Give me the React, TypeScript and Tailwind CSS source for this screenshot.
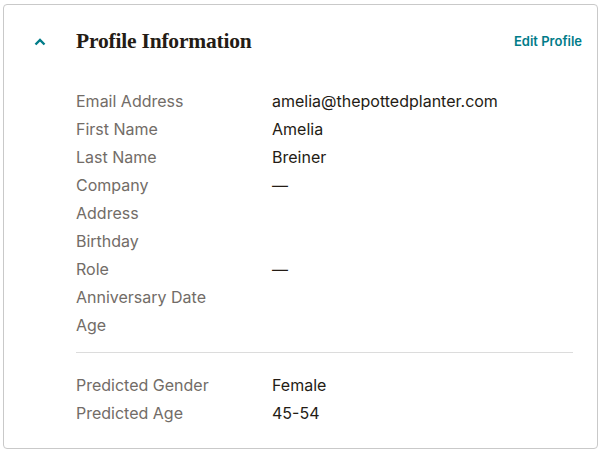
import React from "react";

const rows: [string, string][] = [
  ["Email Address", "amelia@thepottedplanter.com"],
  ["First Name", "Amelia"],
  ["Last Name", "Breiner"],
  ["Company", "—"],
  ["Address", ""],
  ["Birthday", ""],
  ["Role", "—"],
  ["Anniversary Date", ""],
  ["Age", ""],
];

const predicted: [string, string][] = [
  ["Predicted Gender", "Female"],
  ["Predicted Age", "45-54"],
];

function Row({ label, value }: { label: string; value: string }) {
  return (
    <div className="flex h-[28px] items-center">
      <div className="w-[196px] shrink-0 text-[#726c67]">{label}</div>
      <div className="text-[#241c15]">{value}</div>
    </div>
  );
}

export default function App() {
  return (
    <div className="w-[600px] h-[451px] bg-white pl-[3px] pt-[4px]" style={{ fontFamily: "Inter, 'Open Sans', sans-serif" }}>
      <div className="w-[595px] h-[445px] rounded-[4px] border border-[#c9c9c9] bg-white">
        <div className="flex h-[72px] items-center pl-[29px] pr-[15px] pt-[1px]">
          <svg width="14" height="10" viewBox="0 0 14 10" className="mr-[29px]">
            <path d="M2.5 7.5 L7 3 L11.5 7.5" fill="none" stroke="#007c89" strokeWidth="2.4" />
          </svg>
          <div
            className="text-[21.5px] font-bold text-[#241c15] tracking-[-0.2px]"
            style={{ fontFamily: "'Liberation Serif', 'DejaVu Serif', serif" }}
          >
            Profile Information
          </div>
          <div className="ml-auto text-[13px] font-semibold text-[#007c89]">Edit Profile</div>
        </div>
        <div className="pl-[72px] pr-[24px] pt-[10px] text-[16px]">
          {rows.map(([l, v]) => (
            <Row key={l} label={l} value={v} />
          ))}
          <div className="mt-[13px] mb-[18px] h-px bg-[#dcdcdc]" />
          {predicted.map(([l, v]) => (
            <Row key={l} label={l} value={v} />
          ))}
        </div>
      </div>
    </div>
  );
}
